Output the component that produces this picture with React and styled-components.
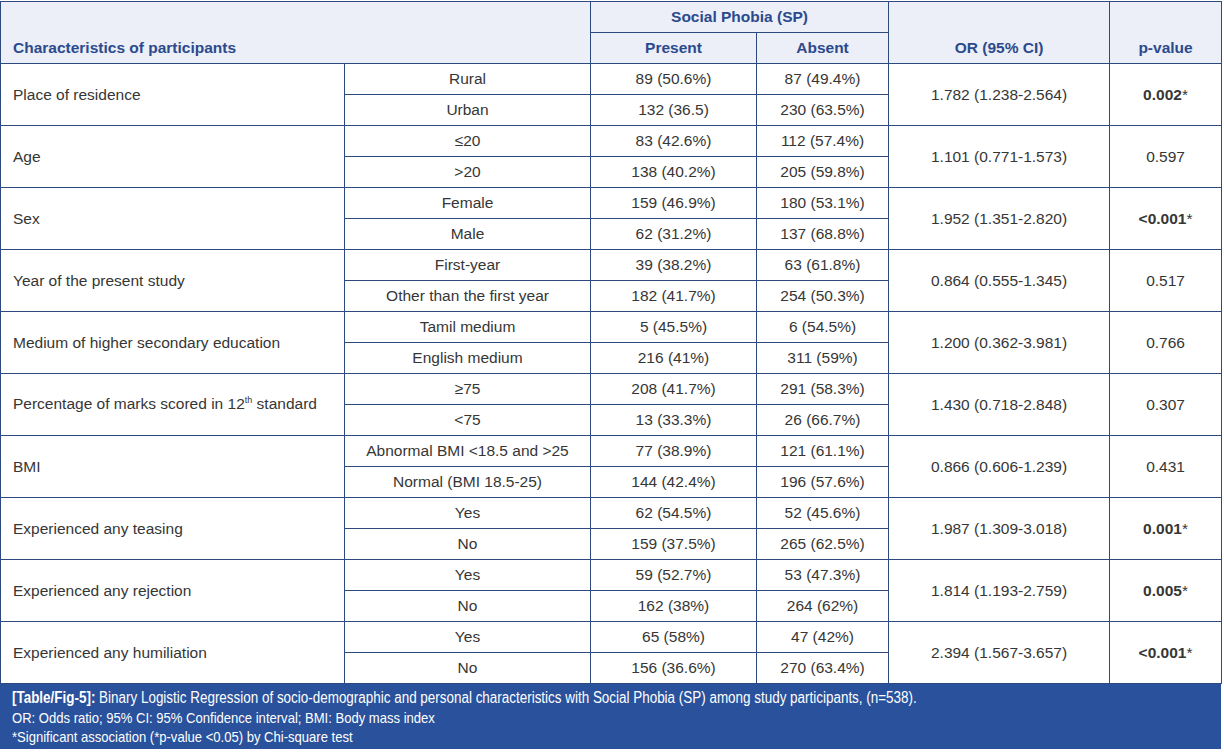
import React from "react";
import styled, { createGlobalStyle } from "styled-components";

const Global = createGlobalStyle`
  body {
    margin: 0;
    background: #fff;
    font-family: "Liberation Sans", Arial, sans-serif;
  }
`;

const Wrap = styled.div`
  width: 1221px;
  padding-top: 1px;
`;

const Table = styled.table`
  width: 1221px;
  border-collapse: collapse;
  table-layout: fixed;
  font-size: 15.5px;
  color: #363636;
`;

const Col = styled.col`
  width: ${(p) => p.$w}px;
`;

const Head = styled.th`
  border: 1px solid #2c4a7e;
  height: 30px;
  background: #eceef8;
  color: #2b4a8c;
  font-weight: 700;
  font-size: 15.5px;
  text-align: ${(p) => (p.$left ? "left" : "center")};
  vertical-align: ${(p) => (p.$bottom ? "bottom" : "middle")};
  padding: ${(p) => (p.$bottom ? `0 0 6px ${p.$left ? 12 : 0}px` : "0")};
`;

const Cell = styled.td`
  border: 1px solid #2c4a7e;
  height: 30px;
  padding: 0 0 0 ${(p) => (p.$left ? 12 : 0)}px;
  text-align: ${(p) => (p.$left ? "left" : "center")};
  vertical-align: middle;
  font-weight: ${(p) => (p.$sig ? 700 : 400)};
`;

const Star = styled.span`
  font-weight: 400;
`;

const Sup = styled.sup`
  font-size: 9px;
`;

const Caption = styled.div`
  background: #2a519b;
  color: #fff;
  padding: 3px 12px 4px 12px;
  height: 58px;
  overflow: hidden;
`;

const CapLine = styled.div`
  font-size: ${(p) => (p.$title ? 16 : 14.5)}px;
  line-height: ${(p) => (p.$title ? 22 : 19)}px;
  white-space: nowrap;
  transform: scaleX(${(p) => (p.$title ? 0.84 : 0.9)});
  transform-origin: left center;
  b { font-weight: 700; }
`;

const rows = [
  { label: "Place of residence", or: "1.782 (1.238-2.564)", p: "0.002", sig: true,
    subs: [["Rural", "89 (50.6%)", "87 (49.4%)"], ["Urban", "132 (36.5)", "230 (63.5%)"]] },
  { label: "Age", or: "1.101 (0.771-1.573)", p: "0.597",
    subs: [["≤20", "83 (42.6%)", "112 (57.4%)"], [">20", "138 (40.2%)", "205 (59.8%)"]] },
  { label: "Sex", or: "1.952 (1.351-2.820)", p: "<0.001", sig: true,
    subs: [["Female", "159 (46.9%)", "180 (53.1%)"], ["Male", "62 (31.2%)", "137 (68.8%)"]] },
  { label: "Year of the present study", or: "0.864 (0.555-1.345)", p: "0.517",
    subs: [["First-year", "39 (38.2%)", "63 (61.8%)"], ["Other than the first year", "182 (41.7%)", "254 (50.3%)"]] },
  { label: "Medium of higher secondary education", or: "1.200 (0.362-3.981)", p: "0.766",
    subs: [["Tamil medium", "5 (45.5%)", "6 (54.5%)"], ["English medium", "216 (41%)", "311 (59%)"]] },
  { label: <>Percentage of marks scored in 12<Sup>th</Sup> standard</>, or: "1.430 (0.718-2.848)", p: "0.307",
    subs: [["≥75", "208 (41.7%)", "291 (58.3%)"], ["<75", "13 (33.3%)", "26 (66.7%)"]] },
  { label: "BMI", or: "0.866 (0.606-1.239)", p: "0.431",
    subs: [["Abnormal BMI <18.5 and >25", "77 (38.9%)", "121 (61.1%)"], ["Normal (BMI 18.5-25)", "144 (42.4%)", "196 (57.6%)"]] },
  { label: "Experienced any teasing", or: "1.987 (1.309-3.018)", p: "0.001", sig: true,
    subs: [["Yes", "62 (54.5%)", "52 (45.6%)"], ["No", "159 (37.5%)", "265 (62.5%)"]] },
  { label: "Experienced any rejection", or: "1.814 (1.193-2.759)", p: "0.005", sig: true,
    subs: [["Yes", "59 (52.7%)", "53 (47.3%)"], ["No", "162 (38%)", "264 (62%)"]] },
  { label: "Experienced any humiliation", or: "2.394 (1.567-3.657)", p: "<0.001", sig: true,
    subs: [["Yes", "65 (58%)", "47 (42%)"], ["No", "156 (36.6%)", "270 (63.4%)"]] },
];

const widths = [344, 246, 166, 132, 221, 112];

export default function App() {
  return (
    <Wrap>
      <Global />
      <Table>
        <colgroup>
          {widths.map((w, i) => <Col key={i} $w={w} />)}
        </colgroup>
        <thead>
          <tr>
            <Head colSpan={2} rowSpan={2} $left $bottom>Characteristics of participants</Head>
            <Head colSpan={2}>Social Phobia (SP)</Head>
            <Head rowSpan={2} $bottom>OR (95% CI)</Head>
            <Head rowSpan={2} $bottom>p-value</Head>
          </tr>
          <tr>
            <Head>Present</Head>
            <Head>Absent</Head>
          </tr>
        </thead>
        <tbody>
          {rows.map((r, i) =>
            r.subs.map((s, j) => (
              <tr key={`${i}-${j}`}>
                {j === 0 && <Cell rowSpan={2} $left>{r.label}</Cell>}
                <Cell>{s[0]}</Cell>
                <Cell>{s[1]}</Cell>
                <Cell>{s[2]}</Cell>
                {j === 0 && <Cell rowSpan={2}>{r.or}</Cell>}
                {j === 0 && (
                  <Cell rowSpan={2} $sig={r.sig}>
                    {r.p}{r.sig && <Star>*</Star>}
                  </Cell>
                )}
              </tr>
            ))
          )}
        </tbody>
      </Table>
      <Caption>
        <CapLine $title><b>[Table/Fig-5]:</b> Binary Logistic Regression of socio-demographic and personal characteristics with Social Phobia (SP) among study participants, (n=538).</CapLine>
        <CapLine>OR: Odds ratio; 95% CI: 95% Confidence interval; BMI: Body mass index</CapLine>
        <CapLine>*Significant association (*p-value &lt;0.05) by Chi-square test</CapLine>
      </Caption>
    </Wrap>
  );
}
